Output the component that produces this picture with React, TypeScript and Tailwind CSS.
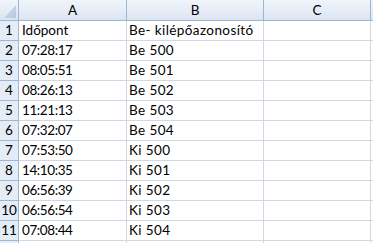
import React from "react";

const rows: [string, string][] = [
  ["Időpont", "Be- kilépőazonosító"],
  ["07:28:17", "Be 500"],
  ["08:05:51", "Be 501"],
  ["08:26:13", "Be 502"],
  ["11:21:13", "Be 503"],
  ["07:32:07", "Be 504"],
  ["07:53:50", "Ki 500"],
  ["14:10:35", "Ki 501"],
  ["06:56:39", "Ki 502"],
  ["06:56:54", "Ki 503"],
  ["07:08:44", "Ki 504"],
];

const hdr = "bg-gradient-to-b from-[#f1f5fb] to-[#dbe5f1] border-r border-b border-[#9eb6ce]";

export default function App() {
  return (
    <div
      className="w-[373px] h-[243px] overflow-hidden bg-white text-[13.5px] text-black"
      style={{ fontFamily: "Lato, 'Open Sans', sans-serif" }}
    >
      {/* column headers */}
      <div className="flex h-[21px]">
        <div className={`w-[19px] shrink-0 relative ${hdr}`}>
          <svg className="absolute right-[2px] bottom-[2px]" width="12" height="13" viewBox="0 0 12 13">
            <defs>
              <linearGradient id="tri" x1="0" y1="0" x2="1" y2="1">
                <stop offset="0" stopColor="#d6e1ef" />
                <stop offset="1" stopColor="#b3c6de" />
              </linearGradient>
            </defs>
            <polygon points="12,0 12,13 0,13" fill="url(#tri)" />
          </svg>
        </div>
        <div className={`w-[108px] shrink-0 flex items-center justify-center pt-[1px] ${hdr}`}>A</div>
        <div className={`w-[137px] shrink-0 flex items-center justify-center pt-[1px] ${hdr}`}>B</div>
        <div className={`w-[107px] shrink-0 flex items-center justify-center pt-[1px] ${hdr}`}>C</div>
        <div className={`flex-1 ${hdr} border-r-0`} />
      </div>
      {rows.map(([a, b], i) => (
        <div key={i} className="flex h-[20px]">
          <div className="w-[19px] shrink-0 bg-[#e4ecf7] border-r border-b border-[#9eb6ce] flex items-end justify-center pb-[3px] leading-none">
            {i + 1}
          </div>
          <div
            className={`w-[108px] shrink-0 border-r border-b border-[#d0d7e5] flex items-end pl-[3px] pb-[3px] leading-none ${
              i === 0 ? "" : "tracking-[-0.4px]"
            }`}
          >
            {a}
          </div>
          <div className="w-[137px] shrink-0 border-r border-b border-[#d0d7e5] flex items-end pl-[2px] pb-[3px] leading-none tracking-[0.4px]">
            {b}
          </div>
          <div className="w-[107px] shrink-0 border-r border-b border-[#d0d7e5]" />
          <div className="flex-1 border-b border-[#d0d7e5]" />
        </div>
      ))}
      <div className="flex h-[20px]">
        <div className="w-[19px] shrink-0 bg-[#e4ecf7] border-r border-[#9eb6ce]" />
        <div className="w-[108px] shrink-0 border-r border-[#d0d7e5]" />
        <div className="w-[137px] shrink-0 border-r border-[#d0d7e5]" />
        <div className="w-[107px] shrink-0 border-r border-[#d0d7e5]" />
      </div>
    </div>
  );
}
